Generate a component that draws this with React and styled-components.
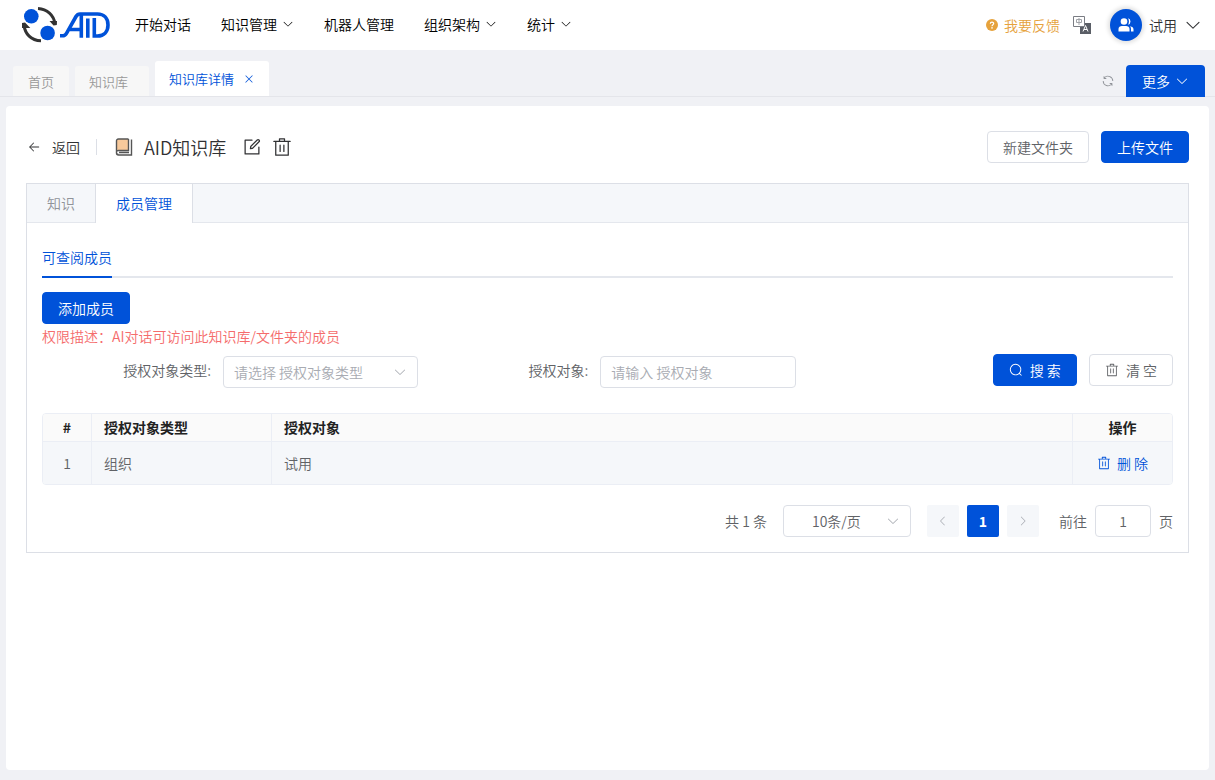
import React, { useState } from "react";
import styled, { createGlobalStyle } from "styled-components";

const icons = {
  arrowDown: [
    "M831.872 340.864 512 652.672 192.128 340.864a30.592 30.592 0 0 0-42.752 0 29.12 29.12 0 0 0 0 41.6L489.664 714.24a32 32 0 0 0 44.672 0l340.288-331.712a29.12 29.12 0 0 0 0-41.728 30.592 30.592 0 0 0-42.752 0z",
  ],
  arrowLeft: [
    "M609.408 149.376 277.76 489.6a32 32 0 0 0 0 44.672l331.648 340.352a29.12 29.12 0 0 0 41.728 0 30.592 30.592 0 0 0 0-42.752L339.264 511.936l311.872-319.872a30.592 30.592 0 0 0 0-42.688 29.12 29.12 0 0 0-41.728 0z",
  ],
  arrowRight: [
    "M340.864 149.312a30.592 30.592 0 0 0 0 42.752L652.736 512 340.864 831.872a30.592 30.592 0 0 0 0 42.752 29.12 29.12 0 0 0 41.728 0L714.24 534.336a32 32 0 0 0 0-44.672L382.592 149.376a29.12 29.12 0 0 0-41.728 0z",
  ],
  close: [
    "M764.288 214.592 512 466.88 259.712 214.592a31.936 31.936 0 0 0-45.12 45.12L466.752 512 214.528 764.224a31.936 31.936 0 1 0 45.12 45.184L512 557.184l252.288 252.288a31.936 31.936 0 0 0 45.12-45.12L557.12 512.064l252.288-252.352a31.936 31.936 0 1 0-45.12-45.184z",
  ],
  trash: [
    "M160 256H96a32 32 0 0 1 0-64h256V95.936a32 32 0 0 1 32-32h256a32 32 0 0 1 32 32V192h256a32 32 0 1 1 0 64h-64v672a32 32 0 0 1-32 32H192a32 32 0 0 1-32-32zm448-64v-64H416v64zM224 896h576V256H224zm192-128a32 32 0 0 1-32-32V416a32 32 0 0 1 64 0v320a32 32 0 0 1-32 32m192 0a32 32 0 0 1-32-32V416a32 32 0 0 1 64 0v320a32 32 0 0 1-32 32",
  ],
  search: [
    "m795.904 750.72 124.992 124.928a32 32 0 0 1-45.248 45.248L750.656 795.904a416 416 0 1 1 45.248-45.248zM480 832a352 352 0 1 0 0-704 352 352 0 0 0 0 704",
  ],
  edit: [
    "M832 512a32 32 0 1 1 64 0v352a32 32 0 0 1-32 32H160a32 32 0 0 1-32-32V160a32 32 0 0 1 32-32h352a32 32 0 0 1 0 64H192v640h640z",
    "m469.952 554.24 52.8-7.552L847.104 222.4a32 32 0 1 0-45.248-45.248L477.44 501.44l-7.552 52.8zm422.4-422.4a96 96 0 0 1 0 135.808l-331.84 331.84a32 32 0 0 1-18.112 9.088L436.8 623.68a32 32 0 0 1-36.224-36.224l15.104-105.6a32 32 0 0 1 9.024-18.112l331.904-331.84a96 96 0 0 1 135.744 0z",
  ],
  back: [
    "M224 480h640a32 32 0 1 1 0 64H224a32 32 0 0 1 0-64",
    "m237.248 512 265.408 265.344a32 32 0 0 1-45.312 45.312l-288-288a32 32 0 0 1 0-45.312l288-288a32 32 0 1 1 45.312 45.312z",
  ],
  refresh: [
    "M771.776 794.88A384 384 0 0 1 128 512h64a320 320 0 0 0 555.712 216.448H654.72a32 32 0 1 1 0-64h149.056a32 32 0 0 1 32 32v148.928a32 32 0 1 1-64 0v-50.56zM276.288 295.616h92.992a32 32 0 0 1 0 64H220.16a32 32 0 0 1-32-32V178.56a32 32 0 0 1 64 0v50.56A384 384 0 0 1 896.128 512h-64a320 320 0 0 0-555.776-216.384z",
  ],
};

const Icon = ({ name, size = 14 }) => (
  <Svg viewBox="0 0 1024 1024" width={size} height={size} aria-hidden="true">
    {icons[name].map((d) => (
      <path key={d} d={d} fill="currentColor" />
    ))}
  </Svg>
);

const Logo = () => (
  <Svg viewBox="0 0 90 38" width="90" height="38" role="img" aria-label="AID">
    <circle cx="10.3" cy="10.3" r="7.3" fill="#0052d9" />
    <circle cx="26.6" cy="27" r="7.3" fill="#0052d9" />
    <g fill="none" stroke="#333" strokeWidth="3">
      <path d="M17 2.500C26 3 33 9 34 18" />
      <path d="M20 34.800C10 34.500 4 28 3 19" />
    </g>
    <path d="M28.500 15l4 4.500 3.300-.5.200-4zM9.300 22l-5.300-5.500-3 .5V22z" fill="#333" />
    <g fill="none" stroke="#0052d9" strokeWidth="3.600">
      <path d="M39 29.800h2.500c2 0 3-.8 4-2.500L55 10.500c1-1.700 2-2.500 4-2.500h17.500c6.500 0 10.500 4.500 10.500 11s-4 11-10.500 11h-3.200V12" />
      <path d="M49 23.500h10M60.300 9v22.700M66.800 12.500v19.200" />
    </g>
  </Svg>
);

const menus = [
  { label: "开始对话" },
  { label: "知识管理", sub: true },
  { label: "机器人管理" },
  { label: "组织架构", sub: true },
  { label: "统计", sub: true },
];

const rows = [{ id: 1, type: "组织", target: "试用" }];

const App = () => {
  const [tab, setTab] = useState("member");

  return (
    <>
      <GlobalStyle />
      <Page>
        <Header>
          <Logo />
          <Nav>
            {menus.map((m) => (
              <NavLink key={m.label} href="#">
                {m.label}
                {m.sub && <Icon name="arrowDown" size={12} />}
              </NavLink>
            ))}
          </Nav>
          <HeaderRight>
            <Feedback href="#">
              <Svg viewBox="0 0 12 12" width="12" height="12" aria-hidden="true">
                <circle cx="6" cy="6" r="6" fill="#e6a23c" />
                <path d="M4.300 4.800C4.300 2.500 7.700 2.600 7.700 4.600 7.700 5.800 6 5.800 6 7.200" fill="none" stroke="#fff" strokeWidth="1.200" />
                <circle cx="6" cy="8.900" r="0.800" fill="#fff" />
              </Svg>
              我要反馈
            </Feedback>
            <PlainButton aria-label="切换语言">
              <Svg viewBox="0 0 20 20" width="20" height="20" aria-hidden="true">
                <path d="M8 8h11v11H8z" fill="#5a5e66" />
                <path d="M11 16.500l2.500-6 2.500 6M12 14.500h3" fill="none" stroke="#fff" />
                <path d="M1.500 1.500h11v10h-11z" fill="#fff" stroke="#7a7d84" />
                <path d="M4.500 4.500h5v3h-5zM7 3v7" fill="none" stroke="#a0a3a8" />
              </Svg>
            </PlainButton>
            <User>
              <Avatar>
                <Svg viewBox="0 0 18 18" width="18" height="18" aria-hidden="true">
                  <g fill="#fff">
                    <circle cx="7" cy="5.500" r="3.300" />
                    <path d="M1.500 15.500V13c0-2 1.500-3 3.500-3h4c2 0 3.500 1 3.500 3v2.500z" />
                    <path d="M11 2.300a3.300 3.300 0 0 1 0 6.400c1.300-1.800 1.300-4.600 0-6.400zM13 10.200c2.300.3 3.500 1.500 3.500 3.300v2H14V13c0-1.200-.3-2.100-1-2.800z" />
                  </g>
                </Svg>
              </Avatar>
              试用
              <Icon name="arrowDown" size={18} />
            </User>
          </HeaderRight>
        </Header>

        <TagBar>
          <Tag href="#">首页</Tag>
          <Tag href="#" $closable>知识库</Tag>
          <Tag href="#" $active>
            知识库详情
            <Icon name="close" size={12} />
          </Tag>
          <TagActions>
            <PlainButton aria-label="刷新">
              <Icon name="refresh" />
            </PlainButton>
            <MoreButton>
              更多
              <Icon name="arrowDown" />
            </MoreButton>
          </TagActions>
        </TagBar>

        <Card>
          <TitleRow>
            <BackLink href="#">
              <Icon name="back" />
              返回
            </BackLink>
            <Divider />
            <Svg viewBox="0 0 18 18" width="18" height="18" aria-hidden="true">
              <path d="M3 1h10v12H2V2z" fill="#f7c99b" />
              <path d="M13.500 1H3.500C2 1 1.500 2 1.500 3v12c0 1.500 1 2 2 2h13V1.500M13.500 1v11.500H3.500c-3 0-2.500 4 0 4M4 14.500h10" fill="none" stroke="#555" strokeWidth="1.400" />
            </Svg>
            <Title>AID知识库</Title>
            <TitleTools>
              <PlainButton aria-label="编辑">
                <Icon name="edit" size={20} />
              </PlainButton>
              <PlainButton aria-label="删除知识库">
                <Icon name="trash" size={20} />
              </PlainButton>
            </TitleTools>
            <ButtonGroup>
              <Button>新建文件夹</Button>
              <Button $primary>上传文件</Button>
            </ButtonGroup>
          </TitleRow>

          <Panel>
            <PanelTabs>
              <PanelTab $active={tab === "doc"} onClick={() => setTab("doc")}>知识</PanelTab>
              <PanelTab $active={tab === "member"} onClick={() => setTab("member")}>成员管理</PanelTab>
            </PanelTabs>
            <PanelBody>
              <SubTabs>
                <SubTab>可查阅成员</SubTab>
              </SubTabs>
              <Button $primary>添加成员</Button>
              <Tip>权限描述：AI对话可访问此知识库/文件夹的成员</Tip>

              <SearchForm onSubmit={(e) => e.preventDefault()}>
                <Field>
                  <Label htmlFor="type">授权对象类型:</Label>
                  <Control>
                    <Select id="type" $placeholder defaultValue="">
                      <option value="">请选择 授权对象类型</option>
                    </Select>
                    <Icon name="arrowDown" />
                  </Control>
                </Field>
                <Field>
                  <Label htmlFor="target">授权对象:</Label>
                  <Control>
                    <Input id="target" placeholder="请输入 授权对象" />
                  </Control>
                </Field>
                <ButtonGroup>
                  <Button $primary type="submit">
                    <Icon name="search" />
                    搜 索
                  </Button>
                  <Button type="reset">
                    <Icon name="trash" />
                    清 空
                  </Button>
                </ButtonGroup>
              </SearchForm>

              <TableWrap>
                <Table>
                  <colgroup>
                    <col width="48" />
                    <col width="180" />
                    <col />
                    <col width="100" />
                  </colgroup>
                  <thead>
                    <tr>
                      <Th $center>#</Th>
                      <Th>授权对象类型</Th>
                      <Th>授权对象</Th>
                      <Th $center>操作</Th>
                    </tr>
                  </thead>
                  <tbody>
                    {rows.map((row) => (
                      <tr key={row.id}>
                        <Td $center>{row.id}</Td>
                        <Td>{row.type}</Td>
                        <Td>{row.target}</Td>
                        <Td $center>
                          <LinkButton>
                            <Icon name="trash" />
                            删 除
                          </LinkButton>
                        </Td>
                      </tr>
                    ))}
                  </tbody>
                </Table>
              </TableWrap>

              <Pagination>
                <span>共 1 条</span>
                <PageSize>
                  <Select aria-label="每页条数" $indent>
                    <option>10条/页</option>
                  </Select>
                  <Icon name="arrowDown" />
                </PageSize>
                <Pager>
                  <PageButton disabled aria-label="上一页">
                    <Icon name="arrowLeft" size={12} />
                  </PageButton>
                  <PageButton $active>1</PageButton>
                  <PageButton disabled aria-label="下一页">
                    <Icon name="arrowRight" size={12} />
                  </PageButton>
                </Pager>
                <Jump>
                  前往
                  <JumpInput defaultValue="1" />
                  页
                </Jump>
              </Pagination>
            </PanelBody>
          </Panel>
        </Card>
      </Page>
    </>
  );
};

export default App;

const GlobalStyle = createGlobalStyle`
  * {
    box-sizing: border-box;
  }
  body {
    margin: 0;
    background: #f0f1f5;
    color: #606266;
    font-size: 14px;
  }
  body, button, input, select {
    font-family: "Noto Sans CJK SC", sans-serif;
    font-weight: 350;
  }
  a {
    text-decoration: none;
  }
`;

const Svg = styled.svg`
  display: block;
  flex: none;
`;

const Page = styled.div`
  display: flex;
  flex-direction: column;
  min-height: 100vh;
`;

const Header = styled.header`
  display: flex;
  align-items: center;
  height: 50px;
  padding: 0 13px 0 21px;
  background: #fff;
`;

const Nav = styled.nav`
  display: flex;
  gap: 30px;
  margin-left: 24px;
  padding-bottom: 2px;
`;

const NavLink = styled.a`
  display: flex;
  align-items: center;
  gap: 5px;
  color: #000;
`;

const HeaderRight = styled.div`
  display: flex;
  align-items: center;
  margin-left: auto;
`;

const Feedback = styled.a`
  display: flex;
  align-items: center;
  gap: 6px;
  margin-right: 12px;
  color: #e6a23c;
`;

const PlainButton = styled.button`
  display: flex;
  padding: 0;
  border: none;
  background: none;
  color: inherit;
  cursor: pointer;
`;

const User = styled(PlainButton)`
  align-items: center;
  gap: 7px;
  margin-left: 18px;
  color: #303133;
  font-size: 14px;
`;

const Avatar = styled.span`
  display: flex;
  align-items: center;
  justify-content: center;
  width: 32px;
  height: 32px;
  border-radius: 50%;
  background: #0052d9;
  box-shadow: 0 0 4px 2px #e0e0e0;
`;

const TagBar = styled.div`
  display: flex;
  align-items: flex-end;
  gap: 6px;
  height: 47px;
  padding: 0 10px 0 13px;
  border-bottom: 1px solid #e4e5ea;
`;

const Tag = styled.a`
  display: flex;
  align-items: center;
  gap: 9px;
  height: ${(p) => (p.$active ? "35px" : "30px")};
  padding: 0 ${(p) => (p.$closable ? "21px" : "14px")} 0 14px;
  border-radius: 3px 3px 0 0;
  background: ${(p) => (p.$active ? "#fff" : "#f7f7f7")};
  color: ${(p) => (p.$active ? "#0052d9" : "#999")};
  font-size: 13px;

  &:first-child {
    padding: 0 15px;
  }
`;

const TagActions = styled.div`
  display: flex;
  align-items: center;
  gap: 11px;
  margin: 0 0 -1px auto;
  color: #909399;
`;

const MoreButton = styled.button`
  display: flex;
  align-items: center;
  gap: 5px;
  height: 32px;
  padding: 0 16px;
  border: none;
  border-radius: 4px 4px 0 0;
  background: #0052d9;
  color: #fff;
  font-size: 14px;
`;

const Card = styled.main`
  flex: 1;
  margin: 9px 6px 10px;
  padding: 25px 20px;
  border-radius: 4px;
  background: #fff;
`;

const TitleRow = styled.div`
  display: flex;
  align-items: center;
  margin-bottom: 20px;
  color: #303133;
`;

const BackLink = styled.a`
  display: flex;
  align-items: center;
  gap: 11px;
  margin-left: 1px;
  color: #303133;
`;

const Divider = styled.span`
  width: 1px;
  height: 16px;
  margin: 0 18px 0 16px;
  background: #dcdfe6;
`;

const Title = styled.h1`
  margin: 0 0 0 11px;
  font-size: 18px;
  font-weight: 350;
`;

const TitleTools = styled.div`
  display: flex;
  gap: 10px;
  margin-left: 16px;
`;

const ButtonGroup = styled.div`
  display: flex;
  justify-content: flex-end;
  gap: 12px;
  margin-left: auto;
`;

const Button = styled.button`
  display: flex;
  align-items: center;
  justify-content: center;
  gap: 7px;
  height: 32px;
  padding: 0 15px;
  border: 1px solid ${(p) => (p.$primary ? "#0052d9" : "#dcdfe6")};
  border-radius: 4px;
  background: ${(p) => (p.$primary ? "#0052d9" : "#fff")};
  color: ${(p) => (p.$primary ? "#fff" : "#606266")};
  font-size: 14px;
  white-space: nowrap;
  cursor: pointer;
`;

const Panel = styled.section`
  border: 1px solid #dcdfe6;
`;

const PanelTabs = styled.div`
  display: flex;
  height: 39px;
  border-bottom: 1px solid #e4e7ed;
  background: #f5f7fa;
`;

const PanelTab = styled.button`
  height: 39px;
  margin-left: -1px;
  padding: 0 20px 2px;
  border: 1px solid transparent;
  border-width: 0 1px;
  border-color: ${(p) => (p.$active ? "#dcdfe6" : "transparent")};
  background: ${(p) => (p.$active ? "#fff" : "none")};
  color: ${(p) => (p.$active ? "#0052d9" : "#909399")};
  font-size: 14px;
`;

const PanelBody = styled.div`
  padding: 15px;
`;

const SubTabs = styled.div`
  display: flex;
  margin-bottom: 14px;
  box-shadow: inset 0 -2px #e4e7ed;
`;

const SubTab = styled.button`
  height: 40px;
  padding: 0;
  border: none;
  border-bottom: 2px solid #0052d9;
  background: none;
  color: #0052d9;
  font-size: 14px;
`;

const Tip = styled.p`
  margin: 0;
  color: #f56c6c;
  line-height: 24px;
`;

const SearchForm = styled.form`
  display: grid;
  grid-template-columns: repeat(3, 1fr);
  align-items: start;
  column-gap: 1px;
  margin: 6px 0 25px;
`;

const Field = styled.div`
  display: flex;
`;

const Label = styled.label`
  width: 181px;
  padding-right: 12px;
  line-height: 32px;
  text-align: right;
`;

const Control = styled.div`
  position: relative;
  flex: 1;
  margin-top: 2px;

  & > svg {
    position: absolute;
    top: 9px;
    right: 11px;
    color: #a8abb2;
    pointer-events: none;
  }
`;

const Input = styled.input`
  display: block;
  width: 100%;
  height: 32px;
  padding: 0 10px;
  border: 1px solid #dcdfe6;
  border-radius: 4px;
  background: #fff;
  color: #606266;
  font-size: 14px;

  &::placeholder {
    color: #a8abb2;
  }
`;

const Select = styled.select`
  display: block;
  appearance: none;
  width: 100%;
  height: 32px;
  padding: 0 ${(p) => (p.$indent ? "28px" : "10px")};
  border: 1px solid #dcdfe6;
  border-radius: 4px;
  background: #fff;
  color: ${(p) => (p.$placeholder ? "#a8abb2" : "#606266")};
  font-size: 14px;
`;

const TableWrap = styled.div`
  overflow: hidden;
  border: 1px solid #ebeef5;
  border-radius: 4px;
`;

const Table = styled.table`
  width: 100%;
  table-layout: fixed;
  border-collapse: separate;
  border-spacing: 0;
`;

const Th = styled.th`
  height: 28px;
  padding: 0 12px 2px;
  border-bottom: 1px solid #ebeef5;
  background: #fafafa;
  color: #222;
  font-weight: 700;
  line-height: 20px;
  text-align: ${(p) => (p.$center ? "center" : "left")};

  & + & {
    border-left: 1px solid #ebeef5;
  }
`;

const Td = styled.td`
  height: 42px;
  padding: 0 12px;
  background: #f5f7fa;
  text-align: ${(p) => (p.$center ? "center" : "left")};

  & + & {
    border-left: 1px solid #ebeef5;
  }
`;

const LinkButton = styled.button`
  display: inline-flex;
  align-items: center;
  gap: 6px;
  padding: 0;
  border: none;
  background: none;
  color: #0052d9;
  font-size: 14px;
  white-space: nowrap;
`;

const Pagination = styled.div`
  display: flex;
  align-items: center;
  justify-content: flex-end;
  gap: 16px;
  margin-top: 20px;
`;

const PageSize = styled(Control)`
  flex: none;
  width: 128px;
  margin-top: 0;
`;

const Pager = styled.div`
  display: flex;
  gap: 8px;
`;

const PageButton = styled.button`
  display: flex;
  align-items: center;
  justify-content: center;
  width: 32px;
  height: 32px;
  padding: 0;
  border: none;
  border-radius: 2px;
  background: ${(p) => (p.$active ? "#0052d9" : "#f5f7fa")};
  color: ${(p) => (p.$active ? "#fff" : "#a8abb2")};
  font-size: 14px;
  font-weight: 700;
`;

const Jump = styled.label`
  display: flex;
  align-items: center;
  gap: 8px;
  margin-left: 4px;
`;

const JumpInput = styled(Input)`
  width: 56px;
  text-align: center;
`;
